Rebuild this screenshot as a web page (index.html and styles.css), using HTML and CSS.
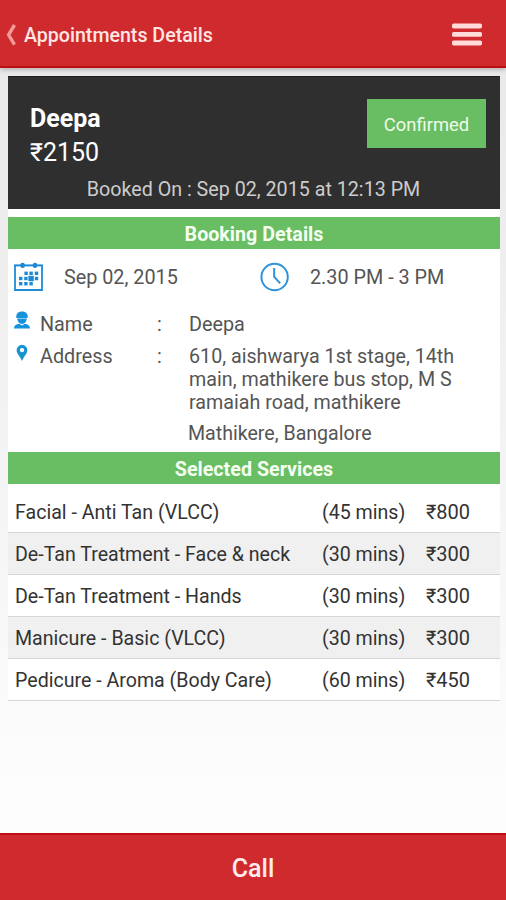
FILE: index.html
```html
<!DOCTYPE html>
<html lang="en">
<head>
    <meta charset="utf-8">
    <meta name="viewport" content="width=device-width, initial-scale=1">
    <title>Appointments Details</title>
    <link rel="stylesheet" href="styles.css">
</head>
<body>
    <header class="topbar">
        <svg class="back-icon" width="10" height="22" viewBox="0 0 10 22">
            <path d="M8.5 1 L2.6 10.8 L8.5 20.6" fill="none" stroke="#f29a98" stroke-width="3.4"/>
        </svg>
        <h1 class="topbar-title">Appointments Details</h1>
        <svg class="menu-icon" width="30" height="24" viewBox="0 0 30 24">
            <rect x="0" y="0.6" width="30" height="4.8" rx="1.6" fill="#ffdcda"/>
            <rect x="0" y="9" width="30" height="4.8" rx="1.6" fill="#ffdcda"/>
            <rect x="0" y="17.6" width="30" height="4.8" rx="1.6" fill="#ffdcda"/>
        </svg>
    </header>

    <main class="content">
        <section class="summary">
            <div class="summary-top">
                <div>
                    <div class="customer">Deepa</div>
                    <div class="total">₹2150</div>
                </div>
                <div class="status">Confirmed</div>
            </div>
            <div class="booked-on">Booked On : Sep 02, 2015 at 12:13 PM</div>
        </section>

        <section class="details">
            <h2 class="section-title">Booking Details</h2>
            <div class="when">
                <svg width="30" height="30" viewBox="0 0 30 30">
                    <g fill="none" stroke="#1e8ad6">
                        <path d="M1 3.4 V28 H28 V3.4" stroke-width="1.8"/>
                        <path d="M0.1 3.4 H28.9" stroke-width="2"/>
                    </g>
                    <g fill="#1e8ad6">
                        <rect x="6.4" y="0.8" width="4.4" height="5.2" rx="2"/>
                        <rect x="18.8" y="0.8" width="4.4" height="5.2" rx="2"/>
                        <rect x="10.4" y="9.6" width="3.4" height="3.4"/>
                        <rect x="15.4" y="9.6" width="3.4" height="3.4"/>
                        <rect x="20.8" y="9.6" width="3.4" height="3.4"/>
                        <rect x="5" y="14.8" width="3.4" height="3.4"/>
                        <rect x="10.2" y="14.8" width="3.4" height="3.4"/>
                        <rect x="14.4" y="13.8" width="5.4" height="5.4"/>
                        <rect x="20.8" y="14.8" width="3.4" height="3.4"/>
                        <rect x="5" y="20" width="3.4" height="3.4"/>
                        <rect x="10.2" y="20" width="3.4" height="3.4"/>
                        <rect x="15.4" y="20" width="3.4" height="3.4"/>
                    </g>
                </svg>
                <span class="when-date">Sep 02, 2015</span>
                <svg width="30" height="30" viewBox="0 0 30 30">
                    <g fill="none" stroke="#2f93dc">
                        <circle cx="14.6" cy="15" r="13.2" stroke-width="2"/>
                        <path d="M14.2 6 V14.8 L20.2 21.4" stroke-width="2"/>
                    </g>
                </svg>
                <span class="when-time">2.30 PM - 3 PM</span>
            </div>
            <div class="field">
                <svg class="field-icon" width="16" height="18" viewBox="0 0 16 18">
                    <g fill="#1793dc">
                        <path d="M2.4 7 C1.6 2.6 4.6 0.6 8 0.6 C11.4 0.6 14.4 2.6 13.6 7 Z"/>
                        <path d="M3.2 7.6 H12.8 C12.6 10.6 10.8 13 8 13 C5.2 13 3.4 10.6 3.2 7.6 Z"/>
                        <path d="M0 17.4 C0.2 14 2.8 13.4 5.2 12.8 L8 14.4 L10.8 12.8 C13.2 13.4 15.8 14 16 17.4 Z"/>
                    </g>
                </svg>
                <span class="field-label">Name</span>
                <span class="field-colon">:</span>
                <span class="field-value">Deepa</span>
            </div>
            <div class="field field-address">
                <svg class="field-icon" width="16" height="18" viewBox="0 0 16 18">
                    <path fill="#1793cf" fill-rule="evenodd" d="M8 0.8 A5.4 5.4 0 0 1 13.4 6.2 C13.4 9.8 9.6 12.4 8 17 C6.4 12.4 2.6 9.8 2.6 6.2 A5.4 5.4 0 0 1 8 0.8 Z M8 3.9 A2.2 2.2 0 1 0 8 8.3 A2.2 2.2 0 1 0 8 3.9 Z"/>
                </svg>
                <span class="field-label">Address</span>
                <span class="field-colon">:</span>
                <div class="field-value">
                    610, aishwarya 1st stage, 14th<br>
                    main, mathikere bus stop, M S<br>
                    ramaiah road, mathikere
                    <div class="city">Mathikere, Bangalore</div>
                </div>
            </div>
        </section>

        <section class="services">
            <h2 class="section-title">Selected Services</h2>
            <div class="service first">
                <span class="service-name">Facial - Anti Tan (VLCC)</span>
                <span class="service-time">(45 mins)</span>
                <span class="service-price">₹800</span>
            </div>
            <div class="service alt">
                <span class="service-name">De-Tan Treatment - Face &amp; neck</span>
                <span class="service-time">(30 mins)</span>
                <span class="service-price">₹300</span>
            </div>
            <div class="service">
                <span class="service-name">De-Tan Treatment - Hands</span>
                <span class="service-time">(30 mins)</span>
                <span class="service-price">₹300</span>
            </div>
            <div class="service alt">
                <span class="service-name">Manicure - Basic (VLCC)</span>
                <span class="service-time">(30 mins)</span>
                <span class="service-price">₹300</span>
            </div>
            <div class="service">
                <span class="service-name">Pedicure - Aroma (Body Care)</span>
                <span class="service-time">(60 mins)</span>
                <span class="service-price">₹450</span>
            </div>
        </section>
    </main>

    <footer class="call">Call</footer>
</body>
</html>
```
FILE: styles.css
```css
* {
    box-sizing: border-box;
}
body {
    margin: 0;
    height: 900px;
    display: flex;
    flex-direction: column;
    font-family: Roboto, "Noto Sans", sans-serif;
    font-size: 19.8px;
    color: #555;
    background: linear-gradient(#e9e9e9 68px, #fdfdfd 800px);
    overflow: hidden;
}

/* Top bar */
.topbar {
    height: 68px;
    flex: none;
    display: flex;
    align-items: center;
    padding: 3px 24px 0 6px;
    background: #cf2a2e;
    border-bottom: 2px solid #c00d14;
    box-shadow: 0 1px 5px rgba(0,0,0,0.3);
}
.topbar-title {
    flex: 1;
    margin: 0 0 0 8px;
    padding-top: 1px;
    font-size: 19.6px;
    font-weight: 500;
    color: #ffe6e4;
}

.content {
    flex: 1;
    padding: 8px 6px 0 8px;
}

/* Dark summary card */
.summary {
    height: 133px;
    padding: 22px 14px 0 22px;
    background: #2f2f2f;
    border-top: 1px solid #1c1c1c;
    color: #fff;
}
.summary-top {
    display: flex;
    justify-content: space-between;
    height: 78px;
}
.customer {
    padding-top: 5px;
    font-size: 25px;
    line-height: 30px;
    font-weight: 700;
}
.total {
    font-size: 25px;
    line-height: 38px;
}
.status {
    width: 119px;
    height: 49px;
    line-height: 51px;
    text-align: center;
    font-size: 18.4px;
    color: #eefbe9;
    background: #69bd62;
}
.booked-on {
    padding-right: 9px;
    line-height: 26px;
    font-size: 19.7px;
    text-align: center;
    color: #ccc;
}

.section-title {
    margin: 0;
    height: 32px;
    line-height: 35px;
    font-size: 19.7px;
    font-weight: 700;
    text-align: center;
    color: #f4fff2;
    background: #69bd62;
}

/* Booking details */
.details {
    height: 243px;
    border-top: 8px solid #fff;
    background: #fff;
}
.when {
    display: flex;
    align-items: center;
    height: 56px;
    padding-left: 6px;
}
.when-date {
    width: 216px;
    padding-left: 20px;
}
.when-time {
    padding-left: 20px;
}
.field {
    display: flex;
    padding: 6px 0 0 6px;
    line-height: 28px;
    height: 32px;
}
.field-label {
    width: 116px;
    padding-left: 10px;
}
.field-colon {
    width: 33px;
    padding-left: 2px;
    margin-left: 9px;
}
.field-value {
    padding-left: 1px;
}
.field-address .field-icon {
    margin-top: 1px;
}
.field-address .field-value {
    font-size: 19.7px;
    line-height: 23px;
    padding-top: 2px;
}
.field-address .city {
    margin-left: -1px;
    padding-top: 8px;
    font-size: 19.6px;
}

/* Services list */
.service {
    display: flex;
    align-items: center;
    height: 42px;
    padding-left: 7px;
    font-size: 19.6px;
    color: #333;
    background: #fff;
    border-bottom: 1px solid #d6d6d6;
}
.service.first {
    height: 49px;
    padding-top: 7px;
}
.service.alt {
    background: #f0f0f0;
}
.service-name {
    width: 307px;
    padding-top: 1px;
}
.service-time {
    width: 104px;
    padding-top: 1px;
}
.service-price {
    font-size: 20px;
}

/* Bottom action */
.call {
    height: 67px;
    flex: none;
    line-height: 67px;
    text-align: center;
    font-size: 25px;
    font-weight: 500;
    color: #ffeceb;
    background: #cf2a2e;
    border-top: 2px solid #c00d14;
}
```
